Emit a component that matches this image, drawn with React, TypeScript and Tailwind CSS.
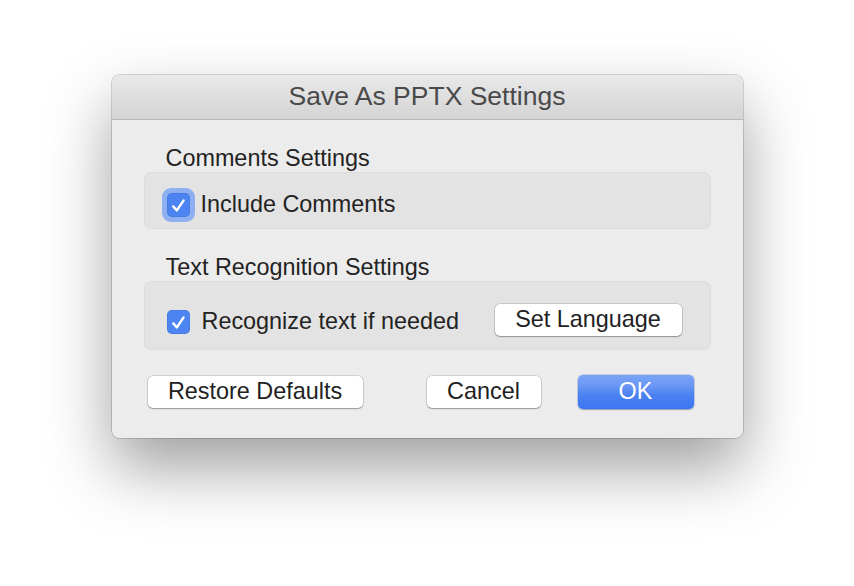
import React from "react";

function Check({ ring = false }: { ring?: boolean }) {
  return (
    <div
      className={`flex items-center justify-center rounded-[9px] ${
        ring ? "bg-[#8eaff1] p-[5px]" : "p-0"
      }`}
    >
      <div className="flex h-[24px] w-[23px] items-center justify-center rounded-[5px] bg-[#4c85f2] shadow-[inset_0_0_0_0.5px_rgba(0,0,0,0.15)]">
        <svg width="17" height="17" viewBox="0 0 17 17" fill="none">
          <path
            d="M3.2 9.4 L6.9 13.4 L13.6 3.4"
            stroke="white"
            strokeWidth="2.4"
            strokeLinecap="round"
            strokeLinejoin="round"
          />
        </svg>
      </div>
    </div>
  );
}

function Button({ children, className = "" }: { children: React.ReactNode; className?: string }) {
  return (
    <button
      type="button"
      className={`flex h-[32px] items-center justify-center rounded-[5px] bg-white text-[23.4px] leading-none text-[#222] shadow-[0_0_0_0.5px_rgba(0,0,0,0.22),0_1px_1.5px_rgba(0,0,0,0.28)] ${className}`}
    >
      {children}
    </button>
  );
}

export default function App() {
  return (
    <div
      className="flex min-h-[586px] w-full justify-center bg-white pt-[75px]"
      style={{ fontFamily: '"Liberation Sans", Arial, sans-serif' }}
    >
      <div className="flex h-[363px] w-[631px] flex-col overflow-hidden rounded-[7px] bg-[#ececec] shadow-[0_0_0_0.5px_rgba(0,0,0,0.3),0_30px_65px_rgba(0,0,0,0.38)]">
        {/* title bar */}
        <div className="flex h-[45px] shrink-0 items-center justify-center border-b border-[#b8b8b8] bg-gradient-to-b from-[#e9e9e9] to-[#d4d4d4] text-[26.5px] text-[#4a4a4a]">
          Save As PPTX Settings
        </div>

        <div className="flex flex-col px-[32px] pt-[24px]">
          <div className="pl-[22px] text-[23.4px] leading-[28px] text-[#232323]">Comments Settings</div>
          <div className="flex h-[57px] items-center gap-[6px] rounded-[7px] border border-[#dcdcdc] bg-[#e3e3e3] pl-[17px] pt-[9px]">
            <Check ring />
            <span className="text-[23.4px] leading-none text-[#232323]">Include Comments</span>
          </div>

          <div className="mt-[24px] pl-[22px] text-[23.4px] leading-[28px] text-[#232323]">
            Text Recognition Settings
          </div>
          <div className="flex h-[69px] items-center rounded-[7px] border border-[#dcdcdc] bg-[#e3e3e3] pl-[22px] pr-[28px] pt-[8px]">
            <div className="flex items-center gap-[12px] pt-[5px]">
              <Check />
              <span className="text-[23.4px] leading-none text-[#232323]">Recognize text if needed</span>
            </div>
            <div className="flex-1" />
            <Button className="w-[187px]">Set Language</Button>
          </div>

          <div className="mt-[25px] flex items-center pl-[4px]">
            <Button className="w-[215px]">Restore Defaults</Button>
            <div className="flex-1" />
            <Button className="w-[114px]">Cancel</Button>
            <button
              type="button"
              className="ml-[37px] mr-[17px] flex h-[34px] w-[116px] items-center justify-center rounded-[5px] bg-[linear-gradient(#78a3f6_0%,#6c99f4_30%,#5a8cf2_45%,#4a81f1_60%,#3c76f0_100%)] text-[23.4px] leading-none text-white shadow-[0_0_0_0.5px_rgba(30,80,200,0.35),0_1px_1.5px_rgba(0,0,0,0.25)]"
            >
              OK
            </button>
          </div>
        </div>
      </div>
    </div>
  );
}
